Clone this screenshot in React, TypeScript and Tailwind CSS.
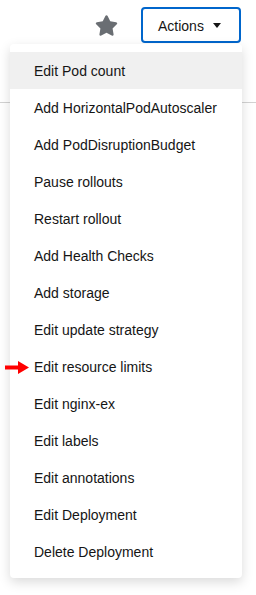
import React from "react";

const items = [
  "Edit Pod count",
  "Add HorizontalPodAutoscaler",
  "Add PodDisruptionBudget",
  "Pause rollouts",
  "Restart rollout",
  "Add Health Checks",
  "Add storage",
  "Edit update strategy",
  "Edit resource limits",
  "Edit nginx-ex",
  "Edit labels",
  "Edit annotations",
  "Edit Deployment",
  "Delete Deployment",
];

export default function App() {
  return (
    <div
      className="relative w-[256px] h-[595px] bg-white overflow-hidden text-[#151515]"
      style={{ fontFamily: "'Liberation Sans', Arial, sans-serif" }}
    >
      <div className="flex items-center justify-end h-[51px] pr-[15px] pt-[7px] pb-[8px]">
        <svg width="23" height="21" viewBox="0 0 576 512" className="mr-[23px] mt-[1px]">
          <path
            fill="#6a6e73"
            d="M259.3 17.8L194 150.2 47.9 171.5c-26.2 3.8-36.7 36.1-17.7 54.6l105.7 103-25 145.5c-4.5 26.3 23.2 46 46.4 33.7L288 439.6l130.7 68.7c23.2 12.2 50.9-7.4 46.4-33.7l-25-145.5 105.7-103c19-18.5 8.5-50.8-17.7-54.6L382 150.2 316.7 17.8c-11.7-23.6-45.6-23.9-57.4 0z"
          />
        </svg>
        <button className="flex items-center h-[36px] w-[100px] border-2 border-[#0066cc] rounded-[4px] pl-[15px] pt-[1px] text-[14px] leading-none text-[#151515]">
          <span>Actions</span>
          <svg width="8" height="5" viewBox="0 0 8 5" className="ml-[9px]">
            <path d="M0 0h8L4 5z" fill="#151515" />
          </svg>
        </button>
      </div>
      <div className="h-[52px] border-b border-[#d2d2d2]" />
      <div className="absolute left-[10px] top-[44px] w-[232px] bg-white rounded-[4px] py-[8px] shadow-[0_4px_12px_rgba(3,3,3,0.15)]">
        {items.map((t, i) => (
          <div
            key={t}
            className={`h-[37px] flex items-center pl-[24px] pt-[2px] text-[14px] ${i === 0 ? "bg-[#f0f0f0]" : ""}`}
          >
            {t}
          </div>
        ))}
      </div>
      <svg
        className="absolute left-[5px] top-[361px]"
        width="24"
        height="13"
        viewBox="0 0 24 13"
      >
        <path d="M0 4.5h13V0l11 6.5L13 13V8.5H0z" fill="#ff0000" />
      </svg>
    </div>
  );
}
